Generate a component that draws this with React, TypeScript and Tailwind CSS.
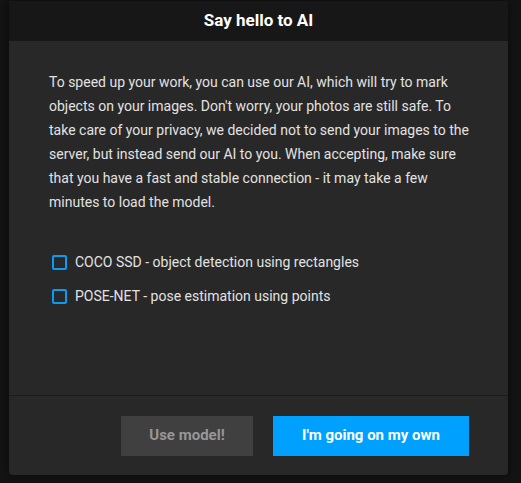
import { useState } from "react";

const models = [
  { id: "ssd", label: "COCO SSD - object detection using rectangles" },
  { id: "pose", label: "POSE-NET - pose estimation using points" },
];

export default function App() {
  const [selected, setSelected] = useState<string[]>([]);

  const toggle = (id: string) =>
    setSelected((prev) =>
      prev.includes(id) ? prev.filter((m) => m !== id) : [...prev, id],
    );

  return (
    <div className="w-full h-[483px] bg-[#141414] overflow-hidden pl-[9px] pt-px font-['Roboto',sans-serif]">
      <div className="w-[499px] h-[474px] flex flex-col bg-[#282828] rounded-b-[4px] shadow-[0_0_12px_rgba(0,0,0,0.6)]">
        <div className="h-10 shrink-0 bg-[#171717] flex items-center justify-center text-white font-bold text-[17px]">
          Say hello to AI
        </div>

        <div className="flex-1 pl-10 pr-7 pt-[29px] text-[#e2e2e2]">
          <p className="text-[14px] leading-6">
            To speed up your work, you can use our AI, which will try to mark
            objects on your images. Don't worry, your photos are still safe. To
            take care of your privacy, we decided not to send your images to the
            server, but instead send our AI to you. When accepting, make sure
            that you have a fast and stable connection - it may take a few
            minutes to load the model.
          </p>

          <div className="mt-[31px] flex flex-col">
            {models.map((model) => (
              <label
                key={model.id}
                className="h-[34px] flex items-center gap-2 pl-[3px] text-[14px] cursor-pointer"
              >
                <span
                  onClick={() => toggle(model.id)}
                  className={`w-[15px] h-[15px] border-2 border-[#0a9cf0] rounded-[2px] ${
                    selected.includes(model.id) ? "bg-[#0a9cf0]" : ""
                  }`}
                />
                {model.label}
              </label>
            ))}
          </div>
        </div>

        <div className="h-[80px] shrink-0 border-t border-[#1b1b1b] flex items-center justify-end gap-5 pr-[39px]">
          <button className="w-[132px] h-10 bg-[#404040] text-[#979797] font-bold text-[15px]">
            Use model!
          </button>
          <button className="w-[196px] h-10 bg-[#00a0ff] text-white font-bold text-[15px]">
            I'm going on my own
          </button>
        </div>
      </div>
    </div>
  );
}
